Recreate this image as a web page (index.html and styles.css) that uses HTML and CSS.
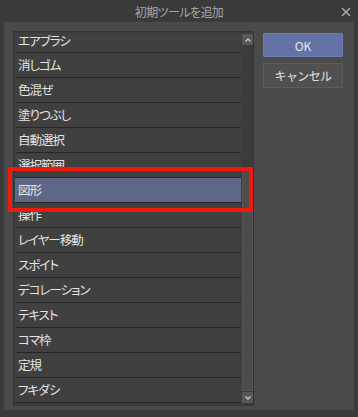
FILE: index.html
```html
<!DOCTYPE html>
<html lang="ja">
<head>
  <meta charset="utf-8">
  <title>初期ツールを追加</title>
  <link rel="stylesheet" href="styles.css">
</head>
<body>
  <div class="dialog">
    <div class="titlebar">
      <span class="title">初期ツールを追加</span>
      <svg class="close" width="10" height="10" viewBox="0 0 10 10">
        <path d="M1 1 L9 9 M9 1 L1 9" stroke="#b4b4b4" stroke-width="1.2" fill="none"/>
      </svg>
    </div>

    <div class="panel">
      <div class="listbox">
        <div class="viewport">
          <ul class="list">
            <li class="partial">エアブラシ</li>
            <li>消しゴム</li>
            <li>色混ぜ</li>
            <li>塗りつぶし</li>
            <li>自動選択</li>
            <li>選択範囲</li>
            <li class="selected">図形</li>
            <li>操作</li>
            <li>レイヤー移動</li>
            <li>スポイト</li>
            <li>デコレーション</li>
            <li>テキスト</li>
            <li>コマ枠</li>
            <li>定規</li>
            <li>フキダシ</li>
          </ul>
        </div>
        <div class="scrollbar">
          <div class="sb-btn">
            <svg width="8" height="6" viewBox="0 0 8 6"><path d="M1.5 4.5 L4 2 L6.5 4.5" stroke="#c8c8c8" stroke-width="1.3" fill="none"/></svg>
          </div>
          <div class="sb-track">
            <div class="sb-thumb"></div>
          </div>
          <div class="sb-btn">
            <svg width="8" height="6" viewBox="0 0 8 6"><path d="M1.5 1.5 L4 4 L6.5 1.5" stroke="#c8c8c8" stroke-width="1.3" fill="none"/></svg>
          </div>
        </div>
      </div>

      <div class="buttons">
        <button class="btn btn-ok">OK</button>
        <button class="btn">キャンセル</button>
      </div>

      <div class="mark"></div>
    </div>
  </div>
</body>
</html>
```

FILE: styles.css
```css
html, body {
  margin: 0;
  height: 100%;
}
body {
  background-color: #3a3a3a;
  font-family: "Noto Sans CJK JP", "Noto Sans", sans-serif;
  font-variant-east-asian: proportional-width;
  font-feature-settings: "palt" 1;
  overflow: hidden;
}
.dialog {
  width: 358px;
  height: 417px;
  display: flex;
  flex-direction: column;
  background-color: #3a3a3a;
}
.titlebar {
  height: 22px;
  flex: none;
  display: flex;
  align-items: center;
  justify-content: center;
  position: relative;
}
.title {
  color: #a6a6a6;
  font-size: 12px;
  letter-spacing: -0.6px;
}
.close {
  position: absolute;
  right: 7px;
  top: 7px;
}

.panel {
  position: relative;
  margin: 0 4px;
  height: 388px;
  background-color: #4a4a4a;
  padding: 9px 10px 4px 9px;
  box-sizing: border-box;
  display: flex;
  gap: 9px;
}

.listbox {
  width: 241px;
  height: 375px;
  box-sizing: border-box;
  border: 1px solid #353535;
  background-color: #3b3b3b;
  display: flex;
}
.viewport {
  flex: 1;
  overflow: hidden;
  padding: 1px 0 0 1px;
}
.list {
  list-style: none;
  margin: 0;
  padding: 0;
}
.list li {
  height: 24px;
  line-height: 24px;
  border-bottom: 1px solid #262626;
  background-color: #404040;
  color: #e4e4e4;
  font-size: 12.5px;
  letter-spacing: -1px;
  padding-left: 3px;
  white-space: nowrap;
}
/* first row is scrolled a few pixels out of view */
.list li.partial {
  height: 19px;
  line-height: 15px;
}
.list li.selected {
  background-color: #5e6886;
}

.scrollbar {
  width: 12px;
  display: flex;
  flex-direction: column;
  padding: 2px 0 2px 1px;
  box-sizing: border-box;
  gap: 1px;
}
.sb-btn {
  height: 11px;
  flex: none;
  background-color: #575757;
  display: flex;
  align-items: center;
  justify-content: center;
}
.sb-track {
  flex: 1;
  display: flex;
  flex-direction: column;
  justify-content: flex-end;
}
.sb-thumb {
  height: 224px;
  background-color: #4c4c4c;
  border: 1px solid #555;
  box-sizing: border-box;
}

.buttons {
  width: 80px;
  margin-top: 2px;
  display: flex;
  flex-direction: column;
  gap: 6px;
}
.btn {
  height: 25px;
  padding: 0;
  font-family: inherit;
  font-size: 12px;
  letter-spacing: -0.6px;
  color: #e0e0e0;
  background-color: #505050;
  border: 1px solid #5c5c5c;
  border-radius: 1px;
}
.btn-ok {
  height: 24px;
  letter-spacing: 0;
  background-color: #6272a4;
  border-color: #6c7cb0;
  color: #e6ebf7;
}

.mark {
  position: absolute;
  left: 4px;
  top: 145px;
  width: 245px;
  height: 45px;
  box-sizing: border-box;
  border: 4px solid #f0190f;
}
```
